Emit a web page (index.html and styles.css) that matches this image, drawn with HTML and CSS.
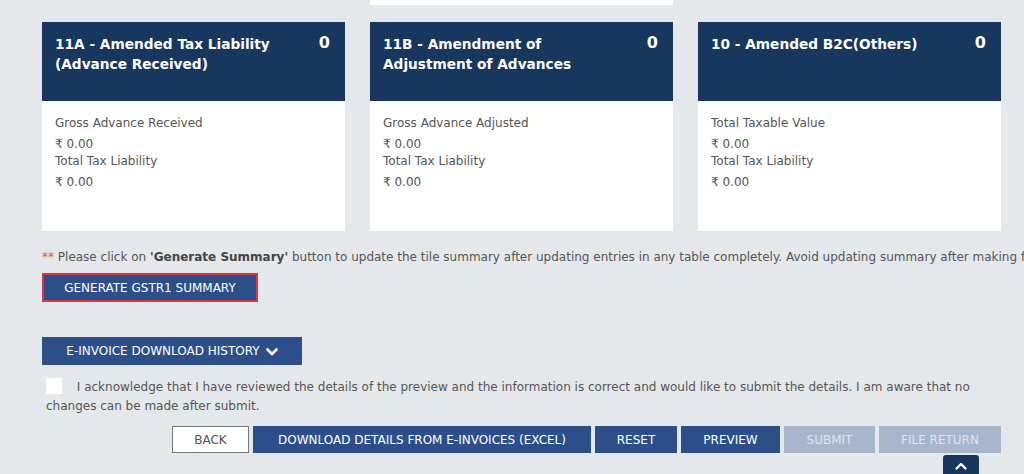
FILE: index.html
```html
<!DOCTYPE html>
<html>
<head>
<meta charset="utf-8">
<link rel="stylesheet" href="styles.css">
</head>
<body>
<div class="page">
  <div class="grid stub-row">
    <div></div>
    <div class="stub"></div>
    <div></div>
  </div>
  <div class="grid tiles">
    <div class="tile">
      <div class="tile-head">
        <div class="tile-title">11A - Amended Tax Liability (Advance Received)</div>
        <div class="tile-count">0</div>
      </div>
      <div class="tile-body">
        <div class="lbl">Gross Advance Received</div>
        <div class="val">₹ 0.00</div>
        <div class="lbl">Total Tax Liability</div>
        <div class="val">₹ 0.00</div>
      </div>
    </div>
    <div class="tile">
      <div class="tile-head">
        <div class="tile-title">11B - Amendment of Adjustment of Advances</div>
        <div class="tile-count">0</div>
      </div>
      <div class="tile-body">
        <div class="lbl">Gross Advance Adjusted</div>
        <div class="val">₹ 0.00</div>
        <div class="lbl">Total Tax Liability</div>
        <div class="val">₹ 0.00</div>
      </div>
    </div>
    <div class="tile">
      <div class="tile-head">
        <div class="tile-title">10 - Amended B2C(Others)</div>
        <div class="tile-count">0</div>
      </div>
      <div class="tile-body">
        <div class="lbl">Total Taxable Value</div>
        <div class="val">₹ 0.00</div>
        <div class="lbl">Total Tax Liability</div>
        <div class="val">₹ 0.00</div>
      </div>
    </div>
  </div>

  <p class="note"><span class="stars">**</span> Please click on <b>'Generate Summary'</b> button to update the tile summary after updating entries in any table completely. Avoid updating summary after making few changes.</p>

  <button class="btn btn-gen">GENERATE GSTR1 SUMMARY</button>

  <div class="hist-wrap">
    <button class="btn btn-hist">E-INVOICE DOWNLOAD HISTORY
      <svg class="chev" viewBox="0 0 12 8" width="12" height="8"><path d="M1.5 1.5 L6 6 L10.5 1.5" fill="none" stroke="#fff" stroke-width="2.6" stroke-linecap="round" stroke-linejoin="round"/></svg>
    </button>
  </div>

  <div class="ack">
    <span class="box"></span>
    I acknowledge that I have reviewed the details of the preview and the information is correct and would like to submit the details. I am aware that no changes can be made after submit.
  </div>

  <div class="actions">
    <button class="btn btn-back">BACK</button>
    <button class="btn btn-dl">DOWNLOAD DETAILS FROM E-INVOICES (EXCEL)</button>
    <button class="btn btn-reset">RESET</button>
    <button class="btn btn-prev">PREVIEW</button>
    <button class="btn btn-off btn-sub">SUBMIT</button>
    <button class="btn btn-off btn-file">FILE RETURN</button>
  </div>

  <div class="totop-row">
    <button class="totop">
      <svg viewBox="0 0 12 8" width="12" height="8"><path d="M1.5 6.5 L6 2 L10.5 6.5" fill="none" stroke="#fff" stroke-width="2.4" stroke-linecap="round" stroke-linejoin="round"/></svg>
    </button>
  </div>
</div>
</body>
</html>
```

FILE: styles.css
```css
* { box-sizing: border-box; }
html, body { margin: 0; padding: 0; }
body {
  background: #e5e8eb;
  font-family: "DejaVu Sans", Verdana, sans-serif;
  color: #555;
  width: 1024px;
  height: 474px;
  overflow: hidden;
}
.page {
  padding: 0 23px 0 42px;
}
.grid {
  display: grid;
  grid-template-columns: 303px 303px 303px;
  column-gap: 25px;
}
.stub-row { height: 5px; }
.stub { background: #fff; height: 5px; }
.tiles { margin-top: 17px; }
.tile { display: flex; flex-direction: column; }
.tile-head {
  background: #17375e;
  color: #fff;
  height: 79px;
  display: flex;
  justify-content: space-between;
  padding: 12px 15px 0 13px;
}
.tile-title {
  font-weight: bold;
  font-size: 13.7px;
  line-height: 20px;
  width: 230px;
}
.tile-count {
  font-weight: bold;
  font-size: 16px;
  line-height: 20px;
  margin-top: -1px;
}
.tile-body {
  background: #fff;
  height: 130px;
  padding: 14px 13px 0 13px;
  font-size: 12px;
}
.lbl { line-height: 17px; margin-bottom: 4px; }
.val { line-height: 17px; }
.note {
  margin: 18px 0 0 0;
  font-size: 12px;
  line-height: 17px;
  white-space: nowrap;
  color: #555;
}
.note b { color: #444; }
.stars { color: #e0534f; }
.btn {
  font-family: "DejaVu Sans", Verdana, sans-serif;
  font-size: 12px;
  color: #fff;
  background: #2c4f8a;
  border: 0;
  padding: 0;
  display: inline-flex;
  align-items: center;
  justify-content: center;
}
.btn-gen {
  margin-top: 7px;
  width: 216px;
  height: 29px;
  border: 2px solid #d9363e;
}
.hist-wrap { margin-top: 35px; }
.btn-hist {
  width: 260px;
  height: 28px;
  gap: 6px;
}
.chev { margin-top: 1px; }
.ack {
  margin-top: 13px;
  font-size: 12px;
  line-height: 19px;
  padding-left: 4px;
  padding-right: 0;
}
.box {
  display: inline-block;
  width: 16px;
  height: 16px;
  background: #fff;
  vertical-align: -3px;
  margin-right: 11px;
}
.actions {
  display: flex;
  justify-content: flex-end;
  gap: 4px;
  margin-top: 10px;
  height: 27px;
}
.actions .btn { height: 27px; }
.btn-back {
  width: 77px;
  background: #fff;
  color: #555;
  border: 1px solid #777;
}
.btn-dl { width: 338px; }
.btn-reset { width: 82px; }
.btn-prev { width: 99px; }
.btn-off { background: #a8b6cb; color: #dde3ec; }
.btn-sub { width: 91px; }
.btn-file { width: 122px; }
.totop-row {
  display: flex;
  justify-content: flex-end;
  padding-right: 22px;
  margin-top: 2px;
}
.totop {
  width: 36px;
  height: 22px;
  background: #17375e;
  border: 0;
  border-radius: 3px 3px 0 0;
  display: flex;
  align-items: center;
  justify-content: center;
}
```
